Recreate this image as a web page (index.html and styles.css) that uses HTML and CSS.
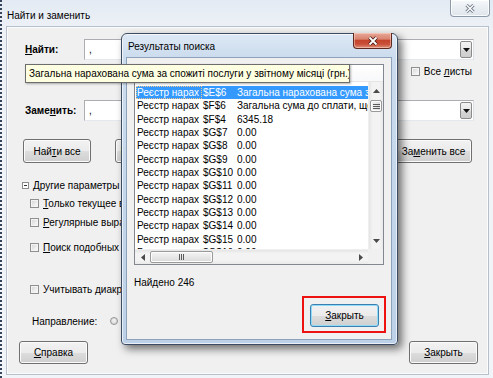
FILE: index.html
```html
<!DOCTYPE html>
<html lang="ru">
<head>
    <meta charset="UTF-8">
    <meta name="viewport" content="width=device-width, initial-scale=1.0">
    <title>Найти и заменить</title>
    <link rel="stylesheet" href="styles.css">
</head>
<body>
    <div class="window">
        <div class="titlebar">
            <span class="title">Найти и заменить</span>
            <div class="close-btn">
                <svg width="14" height="9" viewBox="0 0 14 9"><path d="M3.5 1 L10.5 8 M10.5 1 L3.5 8" stroke="#76808d" stroke-width="3.2"/><path d="M3.5 1 L10.5 8 M10.5 1 L3.5 8" stroke="#fff" stroke-width="1.3"/></svg>
            </div>
        </div>
        <div class="client">
            <div class="field-row">
                <span class="field-label"><u>Н</u>айти:</span>
                <div class="combo">
                    <span class="combo-text">,</span>
                    <span class="combo-arrow"><svg width="7" height="4" viewBox="0 0 7 4"><path d="M0 0 L7 0 L3.5 4Z" fill="#111"/></svg></span>
                </div>
            </div>
            <div class="sheets-row">
                <label class="check"><span class="box"></span><span>Все <u>л</u>исты</span></label>
            </div>
            <div class="field-row">
                <span class="field-label">Заме<u>н</u>ить:</span>
                <div class="combo">
                    <span class="combo-text">,</span>
                    <span class="combo-arrow"><svg width="7" height="4" viewBox="0 0 7 4"><path d="M0 0 L7 0 L3.5 4Z" fill="#111"/></svg></span>
                </div>
            </div>
            <div class="button-row">
                <button class="btn btn-find">Най<u>т</u>и все</button>
                <button class="btn btn-find btn-next">Найти <u>д</u>алее</button>
                <span class="spacer"></span>
                <button class="btn btn-replace">За<u>м</u>енить все</button>
            </div>
            <div class="options">
                <div class="group-toggle"><span class="minus"></span><span>Другие параметры</span></div>
                <label class="check opt opt-1"><span class="box"></span><span><u>Т</u>олько текущее выделение</span></label>
                <label class="check opt opt-2"><span class="box"></span><span><u>Р</u>егулярные выражения</span></label>
                <label class="check opt opt-3"><span class="box"></span><span><u>П</u>оиск подобных</span></label>
                <label class="check opt opt-4"><span class="box"></span><span>Учитывать диакритические знаки</span></label>
                <div class="direction"><span>Направление:</span><span class="radio"></span><span>Вверх</span></div>
            </div>
            <div class="bottom-row">
                <button class="btn btn-bottom"><u>С</u>правка</button>
                <span class="spacer"></span>
                <button class="btn btn-bottom"><u>З</u>акрыть</button>
            </div>
        </div>
    </div>

    <div class="dialog">
        <div class="dialog-titlebar">
            <span class="dialog-title">Результаты поиска</span>
            <div class="dialog-close">
                <svg width="14" height="10" viewBox="0 0 14 10"><path d="M3.5 1.5 L10.5 8.5 M10.5 1.5 L3.5 8.5" stroke="#4a1c14" stroke-width="3.6"/><path d="M3.5 1.5 L10.5 8.5 M10.5 1.5 L3.5 8.5" stroke="#fff" stroke-width="1.8"/></svg>
            </div>
        </div>
        <div class="dialog-client">
            <div class="list">
                <div class="list-header">
                    <span class="hcell c1"></span>
                    <span class="hcell c2"></span>
                    <span class="hcell c3"></span>
                    <span class="hcell c4"></span>
                </div>
                <div class="list-rows">
                    <div class="row selected"><span class="cell c1"><span class="focus"><span class="clip">Реєстр нарахувань</span></span></span><span class="cell c2">$E$6</span><span class="cell c3">Загальна нарахована сума за спожиті послуги</span></div>
                    <div class="row"><span class="cell c1">Реєстр нарахувань</span><span class="cell c2">$F$6</span><span class="cell c3">Загальна сума до сплати, що підлягає</span></div>
                    <div class="row"><span class="cell c1">Реєстр нарахувань</span><span class="cell c2">$F$4</span><span class="cell c3">6345.18</span></div>
                    <div class="row"><span class="cell c1">Реєстр нарахувань</span><span class="cell c2">$G$7</span><span class="cell c3">0.00</span></div>
                    <div class="row"><span class="cell c1">Реєстр нарахувань</span><span class="cell c2">$G$8</span><span class="cell c3">0.00</span></div>
                    <div class="row"><span class="cell c1">Реєстр нарахувань</span><span class="cell c2">$G$9</span><span class="cell c3">0.00</span></div>
                    <div class="row"><span class="cell c1">Реєстр нарахувань</span><span class="cell c2">$G$10</span><span class="cell c3">0.00</span></div>
                    <div class="row"><span class="cell c1">Реєстр нарахувань</span><span class="cell c2">$G$11</span><span class="cell c3">0.00</span></div>
                    <div class="row"><span class="cell c1">Реєстр нарахувань</span><span class="cell c2">$G$12</span><span class="cell c3">0.00</span></div>
                    <div class="row"><span class="cell c1">Реєстр нарахувань</span><span class="cell c2">$G$13</span><span class="cell c3">0.00</span></div>
                    <div class="row"><span class="cell c1">Реєстр нарахувань</span><span class="cell c2">$G$14</span><span class="cell c3">0.00</span></div>
                    <div class="row"><span class="cell c1">Реєстр нарахувань</span><span class="cell c2">$G$15</span><span class="cell c3">0.00</span></div>
                    <div class="row"><span class="cell c1">Реєстр нарахувань</span><span class="cell c2">$G$16</span><span class="cell c3">0.00</span></div>
                </div>
                <div class="vscroll">
                    <span class="arrow"><svg width="7" height="4" viewBox="0 0 7 4"><path d="M0 4 L3.5 0 L7 4Z" fill="#4a4a4a"/></svg></span>
                    <span class="thumb thumb-v"><span class="grip-v"></span></span>
                    <span class="track"></span>
                    <span class="arrow"><svg width="7" height="4" viewBox="0 0 7 4"><path d="M0 0 L7 0 L3.5 4Z" fill="#4a4a4a"/></svg></span>
                </div>
                <div class="hscroll">
                    <span class="arrow"><svg width="4" height="7" viewBox="0 0 4 7"><path d="M4 0 L4 7 L0 3.5Z" fill="#4a4a4a"/></svg></span>
                    <span class="thumb thumb-h"><span class="grip-h"></span></span>
                    <span class="track"></span>
                    <span class="arrow"><svg width="4" height="7" viewBox="0 0 4 7"><path d="M0 0 L0 7 L4 3.5Z" fill="#4a4a4a"/></svg></span>
                </div>
                <div class="corner"></div>
            </div>
            <div class="found">Найдено 246</div>
            <div class="close-row">
                <div class="highlight">
                    <button class="btn btn-default"><u>З</u>акрыть</button>
                </div>
            </div>
        </div>
    </div>

    <div class="tooltip">Загальна нарахована сума за спожиті послуги у звітному місяці (грн.)</div>
</body>
</html>
```

FILE: styles.css
```css
* {
    margin: 0;
    padding: 0;
    box-sizing: border-box;
}

body {
    width: 493px;
    height: 378px;
    overflow: hidden;
    position: relative;
    font-family: "Liberation Sans", Arial, sans-serif;
    font-size: 10px;
    color: #000;
    background: #4f6078;
}

u {
    text-decoration: underline;
}

/* outer window */

.window {
    width: 493px;
    height: 378px;
    display: flex;
    flex-direction: column;
    border-left: 2px dotted #34435a;
    background: linear-gradient(180deg, #e3eaf3 0%, #eef2f7 30px, #f1f4f8 100%);
}

.titlebar {
    height: 26px;
    display: flex;
    align-items: flex-start;
}

.title {
    font-size: 10px;
    padding: 10px 0 0 5px;
}

.close-btn {
    margin-left: auto;
    margin-right: 3px;
    width: 40px;
    height: 17px;
    border: 1px solid #8f9aa9;
    border-top: none;
    border-radius: 0 0 4px 4px;
    background: linear-gradient(180deg, #f7f9fb 0%, #e9eef3 50%, #dfe5ec 100%);
    box-shadow: inset 0 0 0 1px rgba(255,255,255,0.8);
    display: flex;
    align-items: center;
    justify-content: center;
}

.client {
    flex: 1;
    margin: 0 4px 3px 4px;
    border: 1px solid #b7bfca;
    box-shadow: inset 0 0 0 1px #fbfcfd;
    background: #f0f0f0;
    padding: 12px 14px 10px 16px;
    display: flex;
    flex-direction: column;
}

.field-row {
    height: 21px;
    display: flex;
    align-items: center;
}

.field-label {
    width: 61px;
    padding-left: 2px;
    font-weight: bold;
}

.combo {
    flex: 1;
    height: 21px;
    border: 1px solid #abadb3;
    border-right-color: #dbdfe6;
    border-bottom-color: #e3e9ef;
    background: #fff;
    display: flex;
    align-items: center;
    padding: 1px;
}

.combo-text {
    flex: 1;
    padding-left: 3px;
}

.combo-arrow {
    width: 12px;
    height: 17px;
    border: 1px solid #8b8b8b;
    border-radius: 2px;
    background: linear-gradient(180deg, #f3f3f3 0%, #e6e6e6 50%, #d6d6d6 51%, #cdcdcd 100%);
    display: flex;
    align-items: center;
    justify-content: center;
}

.sheets-row {
    height: 40px;
    display: flex;
    justify-content: flex-end;
    padding: 6px 2px 0 0;
}

.check {
    display: flex;
    align-items: center;
    height: 10px;
    white-space: nowrap;
}

.box {
    width: 9px;
    height: 9px;
    border: 1px solid #8e8f8f;
    background: linear-gradient(135deg, #d3d3d3 0%, #f2f2f2 70%, #fff 100%);
    box-shadow: inset 0 0 0 1px #f4f4f4;
    margin-right: 4px;
    flex-shrink: 0;
}

.button-row {
    height: 24px;
    margin-top: 18px;
    display: flex;
}

.spacer {
    flex: 1;
}

.btn {
    font: inherit;
    color: #000;
    height: 24px;
    border: 1px solid #707070;
    border-radius: 3px;
    background: linear-gradient(180deg, #f2f2f2 0%, #ebebeb 50%, #dddddd 51%, #cfcfcf 100%);
    box-shadow: inset 0 0 0 1px #fbfbfb;
    display: flex;
    align-items: center;
    justify-content: center;
    white-space: nowrap;
}

.btn-find {
    width: 68px;
}

.btn-next {
    margin-left: 24px;
}

.btn-replace {
    width: 77px;
    margin-right: 2px;
}

.options {
    margin-top: 17px;
    display: flex;
    flex-direction: column;
}

.group-toggle {
    height: 11px;
    display: flex;
    align-items: center;
    margin-left: -1px;
}

.minus {
    width: 7px;
    height: 7px;
    border: 1px solid #8c8c8c;
    background: #fff;
    margin-right: 4px;
    position: relative;
}

.minus::after {
    content: "";
    position: absolute;
    left: 1px;
    right: 1px;
    top: 2px;
    height: 1px;
    background: #333;
}

.opt {
    margin-left: 7px;
}

.opt-1 { margin-top: 7px; }
.opt-2 { margin-top: 9px; }
.opt-3 { margin-top: 15px; }
.opt-4 { margin-top: 32px; }

.direction {
    margin: 21px 0 0 9px;
    height: 12px;
    display: flex;
    align-items: center;
    white-space: nowrap;
}

.radio {
    width: 8px;
    height: 8px;
    border-radius: 50%;
    border: 1px solid #939393;
    background: radial-gradient(circle at 50% 40%, #f4f4f4, #cfcfcf);
    margin: 0 4px 0 13px;
}

.bottom-row {
    margin: auto -4px 0 -4px;
    display: flex;
}

.btn-bottom {
    width: 69px;
    height: 23px;
}

/* search results dialog */

.dialog {
    position: absolute;
    left: 121px;
    top: 33px;
    width: 277px;
    height: 312px;
    border: 1px solid #3a4b62;
    border-radius: 6px 6px 4px 4px;
    background: linear-gradient(180deg, #dde8f4 0%, #cbdcee 24px, #c2d5ea 60%, #bcd1e8 100%);
    box-shadow: inset 0 0 0 1px rgba(255,255,255,0.65), 4px 4px 9px rgba(0,0,0,0.55);
    display: flex;
    flex-direction: column;
    padding: 0 5px 4px 4px;
    z-index: 2;
}

.dialog-titlebar {
    height: 23px;
    display: flex;
    align-items: flex-start;
}

.dialog-title {
    font-size: 10px;
    padding: 7px 0 0 2px;
}

.dialog-close {
    margin-left: auto;
    margin-top: -1px;
    width: 39px;
    height: 16px;
    border: 1px solid #5e2a20;
    border-top: none;
    border-radius: 0 0 4px 4px;
    background: linear-gradient(180deg, #e7a796 0%, #d98470 40%, #c4452b 50%, #c9503a 75%, #e09478 100%);
    box-shadow: inset 0 0 0 1px rgba(255,220,210,0.5);
    display: flex;
    align-items: center;
    justify-content: center;
}

.dialog-client {
    flex: 1;
    border: 1px solid #8ea2ba;
    background: #f0f0f0;
    display: flex;
    flex-direction: column;
}

.list {
    margin: 6px 0 0 7px;
    width: 250px;
    height: 201px;
    border: 1px solid #828790;
    background: #fff;
    display: grid;
    grid-template-columns: 1fr 15px;
    grid-template-rows: 17px 1fr 15px;
}

.list-header {
    grid-column: 1 / -1;
    display: flex;
    border-bottom: 1px solid #e5e5e5;
    background: linear-gradient(180deg, #fff 0%, #f7f8fa 100%);
}

.hcell {
    border-right: 1px solid #e3e4e6;
}

.hcell.c1 { width: 67px; }
.hcell.c2 { width: 34px; }
.hcell.c3 { width: 114px; }
.hcell.c4 { flex: 1; border-right: none; }

.list-rows {
    overflow: hidden;
    padding-top: 4px;
}

.row {
    display: flex;
    height: 13.33px;
    line-height: 13.33px;
    white-space: nowrap;
    margin-left: 1px;
}

.cell {
    overflow: hidden;
}

.cell.c1 {
    width: 63px;
    margin-right: 3px;
    padding-left: 1px;
}

.cell.c2 {
    width: 34px;
    padding-left: 1px;
}

.cell.c3 {
    flex: 1;
    padding-left: 1px;
}

.row.selected {
    background: #3399ff;
    color: #fff;
}

.row.selected .cell.c1 {
    width: 66px;
    margin-right: 0;
    padding: 0;
}

.focus {
    display: block;
    height: 100%;
    border: 1px dotted #f3c58a;
    line-height: 11.33px;
}

.clip {
    display: block;
    width: 62px;
    overflow: hidden;
}

.vscroll {
    display: flex;
    flex-direction: column;
    background: linear-gradient(90deg, #e5e5e5 0%, #f3f3f3 25%, #f3f3f3 75%, #e9e9e9 100%);
    border-left: 1px solid #efefef;
}

.hscroll {
    display: flex;
    background: linear-gradient(180deg, #e5e5e5 0%, #f3f3f3 25%, #f3f3f3 75%, #e9e9e9 100%);
    border-top: 1px solid #efefef;
}

.arrow {
    display: flex;
    align-items: center;
    justify-content: center;
    flex-shrink: 0;
}

.vscroll .arrow {
    height: 17px;
}

.hscroll .arrow {
    width: 15px;
}

.track {
    flex: 1;
}

.thumb {
    border: 1px solid #9a9a9a;
    border-radius: 2px;
    background: linear-gradient(90deg, #f4f4f4 0%, #e8e8e8 50%, #d9d9d9 100%);
    box-shadow: inset 0 0 0 1px #fcfcfc;
    display: flex;
    align-items: center;
    justify-content: center;
}

.thumb-v {
    height: 12px;
    margin: 1px 1px 0 1px;
}

.thumb-h {
    width: 63px;
    margin: 1px 0 1px 0;
    background: linear-gradient(180deg, #f4f4f4 0%, #e8e8e8 50%, #d9d9d9 100%);
}

.grip-v {
    width: 7px;
    height: 5px;
    background: repeating-linear-gradient(180deg, #5b5b5b 0, #5b5b5b 1px, transparent 1px, transparent 2px);
}

.grip-h {
    width: 5px;
    height: 6px;
    background: repeating-linear-gradient(90deg, #5b5b5b 0, #5b5b5b 1px, transparent 1px, transparent 2px);
}

.corner {
    background: #f0f0f0;
}

.found {
    margin: 12px 0 0 7px;
    line-height: 12px;
}

.close-row {
    margin: 7px 5px 0 0;
    display: flex;
    justify-content: flex-end;
}

.highlight {
    border: 2px solid #ee1111;
    padding: 6px 5px 4px 6px;
}

.btn-default {
    width: 69px;
    height: 23px;
    border-color: #3c7fb1;
    box-shadow: inset 0 0 0 1px #8fdcf9;
}

/* tooltip over everything */

.tooltip {
    position: absolute;
    left: 25px;
    top: 64px;
    width: 325px;
    height: 19px;
    border: 1px solid #6d6d6d;
    background: #ffffe1;
    padding-left: 3px;
    line-height: 17px;
    white-space: nowrap;
    overflow: hidden;
    box-shadow: 1px 1px 2px rgba(0,0,0,0.3);
    z-index: 3;
}
```
